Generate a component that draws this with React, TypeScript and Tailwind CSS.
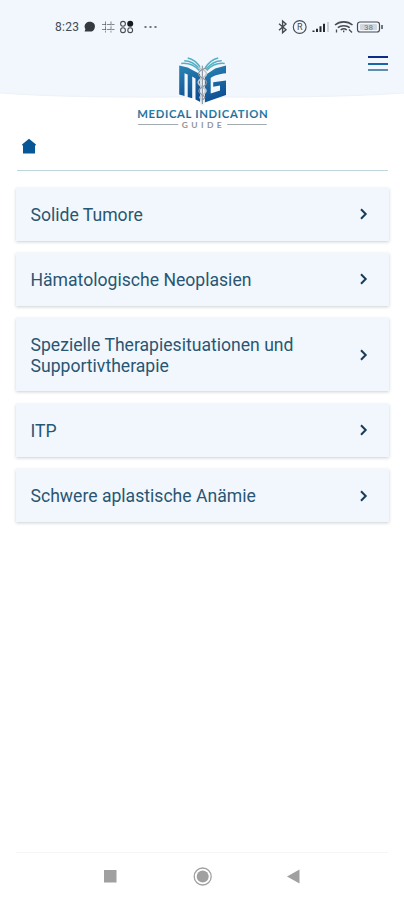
import { clsx } from "clsx";

type Topic = {
  label: string;
  tall?: boolean;
};

const topics: Topic[] = [
  { label: "Solide Tumore" },
  { label: "Hämatologische Neoplasien" },
  { label: "Spezielle Therapiesituationen und Supportivtherapie", tall: true },
  { label: "ITP" },
  { label: "Schwere aplastische Anämie" }
];

function StatusBar() {
  return (
    <div className="flex h-[54px] items-center justify-between pl-[55px] pr-[19px] text-[#454b52]">
      <div className="flex items-center">
        <span className="w-[28px] text-[12px] leading-4 tracking-[0.3px]">8:23</span>
        <svg width="76" height="16" viewBox="0 0 76 16" fill="none" stroke="currentColor">
          <path d="M3 4.2C5 2.3 9 2.3 11 4.5C13 7 11.6 11.5 8.7 12.4L1.6 12.6L2.4 10C1.1 8 1.3 5.8 3 4.2Z" fill="#343a40" stroke="none" />
          <path d="M22.5 2.5V13.5M28 2.5V13.5M19 5.5H31.5M19 10.5H31.5" strokeWidth="1" opacity=".65" strokeDasharray="4 .8" />
          <circle cx="40" cy="4.8" r="2.4" strokeWidth="1.1" />
          <circle cx="47.2" cy="4.8" r="3" fill="#16191d" stroke="none" />
          <circle cx="40" cy="11.2" r="2.4" strokeWidth="1.1" />
          <circle cx="47.2" cy="11.2" r="2.4" strokeWidth="1.1" />
          <path d="M61.5 8H63.5M66.5 8H68.5M71.5 8H73.5" strokeWidth="1.7" />
        </svg>
      </div>
      <svg width="108" height="16" viewBox="0 0 108 16" fill="none" stroke="currentColor" className="font-['Roboto',sans-serif]">
        <path d="M2 4.7L9 10.8L5.6 13.8V2L9 5L2 11.2" strokeWidth="1.4" />
        <circle cx="22.7" cy="8" r="6.4" strokeWidth="1.1" />
        <text x="22.7" y="11.3" textAnchor="middle" fontSize="9" fill="currentColor" stroke="none">R</text>
        <g strokeWidth="2">
          <path d="M36.5 11.4V13M40 9.7V13M43.5 7.2V13M47 4.8V13" stroke="#25292e" />
          <path d="M51 3V13" strokeWidth="1.3" opacity=".35" />
        </g>
        <path d="M58 6C63 1.8 70.500 1.8 75.500 6M60.800 8.7C64 6 69.500 6 72.700 8.7M63.700 11C65.500 9.5 68 9.5 69.800 11" strokeWidth="1.6" />
        <path d="M66.700 11.5V13.2M59.500 10.5V13.5M72 10.5L75 13.5" strokeWidth="1.3" />
        <rect x="80.5" y="3" width="22" height="10" rx="2.5" strokeWidth="1.2" />
        <path d="M105 6V10" strokeWidth="1.5" />
        <rect x="83" y="5" width="17" height="6" rx="1" fill="#d3d7dc" stroke="none" />
        <text x="91.5" y="11" textAnchor="middle" fontSize="8" fill="#6f757c" stroke="none">38</text>
      </svg>
    </div>
  );
}

function Logo() {
  return (
    <svg width="134" height="78" viewBox="135.3 54 134 78" className="font-['Lato',sans-serif]">
      <defs>
        <linearGradient id="book" x1="0" y1="0" x2="0.3" y2="1">
          <stop offset="0" stopColor="#2a86b4" />
          <stop offset="1" stopColor="#0f4f94" />
        </linearGradient>
        <linearGradient id="title" x1="0" y1="0" x2="0" y2="1">
          <stop offset="0" stopColor="#2f93b3" />
          <stop offset="1" stopColor="#245c8e" />
        </linearGradient>
      </defs>
      {/* loose pages */}
      <g fill="none" stroke="#55b0c4" strokeWidth="1.5">
        <path d="M181.500 63.500C188 62.800 195 65.500 199.500 70.500" />
        <path d="M184.500 60.700C190 60.700 196 64 200.500 69.500" />
        <path d="M188 58C193 59 198 63 201.500 68.500" />
        <path d="M225 63.500C218.500 62.800 211.500 65.500 207 70.500" />
        <path d="M222 60.700C216.500 60.700 210.500 64 206 69.500" />
        <path d="M218.500 58C213.500 59 208.500 63 205 68.500" />
      </g>
      {/* covers shaped as M and G */}
      <path fill="url(#book)" d="M179.500 65.500L188 67.500L201 74.500V102.300L195.800 99.600V78.500L192.500 76.500V98.300L188 97V74.500L184.800 73.300V96L179.500 94.600Z" />
      <path fill="url(#book)" d="M226.300 65.500L215.500 68.500L205 75.500V102.500L226.300 95V80.500L213.500 82.300V86.700L220.300 85.400V90.500L211 93.500V78C214.500 75.500 219 74 226.300 73.300Z" />
      {/* caduceus */}
      <g fill="none" strokeLinecap="round">
        <path d="M202.700 67V103.500" stroke="#eef4f8" strokeWidth="4.500" />
        <path d="M202.700 66V103.500" stroke="#939da7" strokeWidth="1.200" />
        <path d="M199 68C208.500 71 208.500 75 202.700 78S197.500 84 202.700 87S207 92 202.700 95S200.700 98 202.700 100" stroke="#c3c8ce" strokeWidth="1.700" />
        <path d="M206.500 68C197 71 197 75 202.700 78S208 84 202.700 87S198.500 92 202.700 95S204.700 98 202.700 100" stroke="#8d96a0" strokeWidth="1.300" strokeDasharray="2 1" />
      </g>
      <text x="137.500" y="117.700" fontSize="11.300" fontWeight="700" textLength="130.500" fill="url(#title)">MEDICAL INDICATION</text>
      <path d="M138.500 124.500H178.500M227.500 124.500H267" stroke="#a2aaaf" strokeWidth="1" />
      <text x="182" y="127.800" fontSize="6.800" fontWeight="700" fill="#8f9599" transform="translate(182 0) scale(1.25 1) translate(-182 0)" textLength="32">GUIDE</text>
    </svg>
  );
}

function Header() {
  return (
    <header className="relative h-[132px]">
      <svg className="absolute inset-x-0 top-0" width="404" height="100" viewBox="0 0 404 100">
        <path d="M0 0H404V93C330 98 250 97 202 97C145 97 70 98 0 93Z" fill="#f2f7fe" />
        <path d="M0 93C70 98 145 97 202 97C250 97 330 98 404 93" fill="none" stroke="#edf2f6" />
      </svg>
      <div className="relative">
        <StatusBar />
        <div className="grid grid-cols-[1fr_134px_1fr]">
          <div />
          <Logo />
          <button type="button" aria-label="Menü" className="mr-4 mt-[2px] flex h-[15px] w-5 flex-col justify-between self-start justify-self-end">
            <span className="h-[2px] w-full bg-[#0b2d86]" />
            <span className="h-[2px] w-full bg-[#1766a5]" />
            <span className="h-[2px] w-full bg-[#608fae]" />
          </button>
        </div>
      </div>
    </header>
  );
}

function TopicCard({ label, tall }: Topic) {
  return (
    <button
      type="button"
      className={clsx(
        "flex w-full items-center justify-between bg-[#f2f6fd] pl-[14.500px] pr-5 text-left shadow-[0_1px_3px_rgba(50,70,80,0.25)]",
        tall ? "h-[73px]" : "h-[52.500px]"
      )}
    >
      <span className="w-[280px] pt-[2px] text-[17.600px] leading-[21px] text-[#285672]">{label}</span>
      <svg width="10" height="12" viewBox="0 0 10 12" fill="none" stroke="#173c59" strokeWidth="2">
        <path d="M2 1.300L6.700 6L2 10.700" />
      </svg>
    </button>
  );
}

export default function App() {
  return (
    <div className="flex h-[900px] w-[404px] flex-col overflow-hidden bg-white font-['Roboto',sans-serif]">
      <Header />
      <main className="flex-1 pl-4 pr-[15px]">
        <nav className="mx-px flex h-[39px] items-start border-b border-[#bfd5dc] pl-[4px] pt-[6px]">
          <svg width="16" height="17" viewBox="0 0 16 17" fill="#075796">
            <path d="M8 .7L15 6.500L14.300 7.800H14V15.500H2V7.800H1.700L1 6.500Z" />
          </svg>
        </nav>
        <div className="mt-[17px] flex flex-col gap-[12.700px]">
          {topics.map((topic) => <TopicCard key={topic.label} {...topic} />)}
        </div>
      </main>
      <footer className="mx-4 flex h-[48px] items-center border-t border-[#f5f5f5] pl-[88px]">
        <svg width="198" height="22" viewBox="0 0 198 22" fill="#a0a0a0">
          <rect x="0" y="4" width="12.500" height="12.500" />
          <circle cx="98.700" cy="10.500" r="8.500" fill="none" stroke="#a0a0a0" strokeWidth="1.300" />
          <circle cx="98.700" cy="10.500" r="6" />
          <path d="M183 10.500L195.500 3.500V17.500Z" />
        </svg>
      </footer>
    </div>
  );
}
